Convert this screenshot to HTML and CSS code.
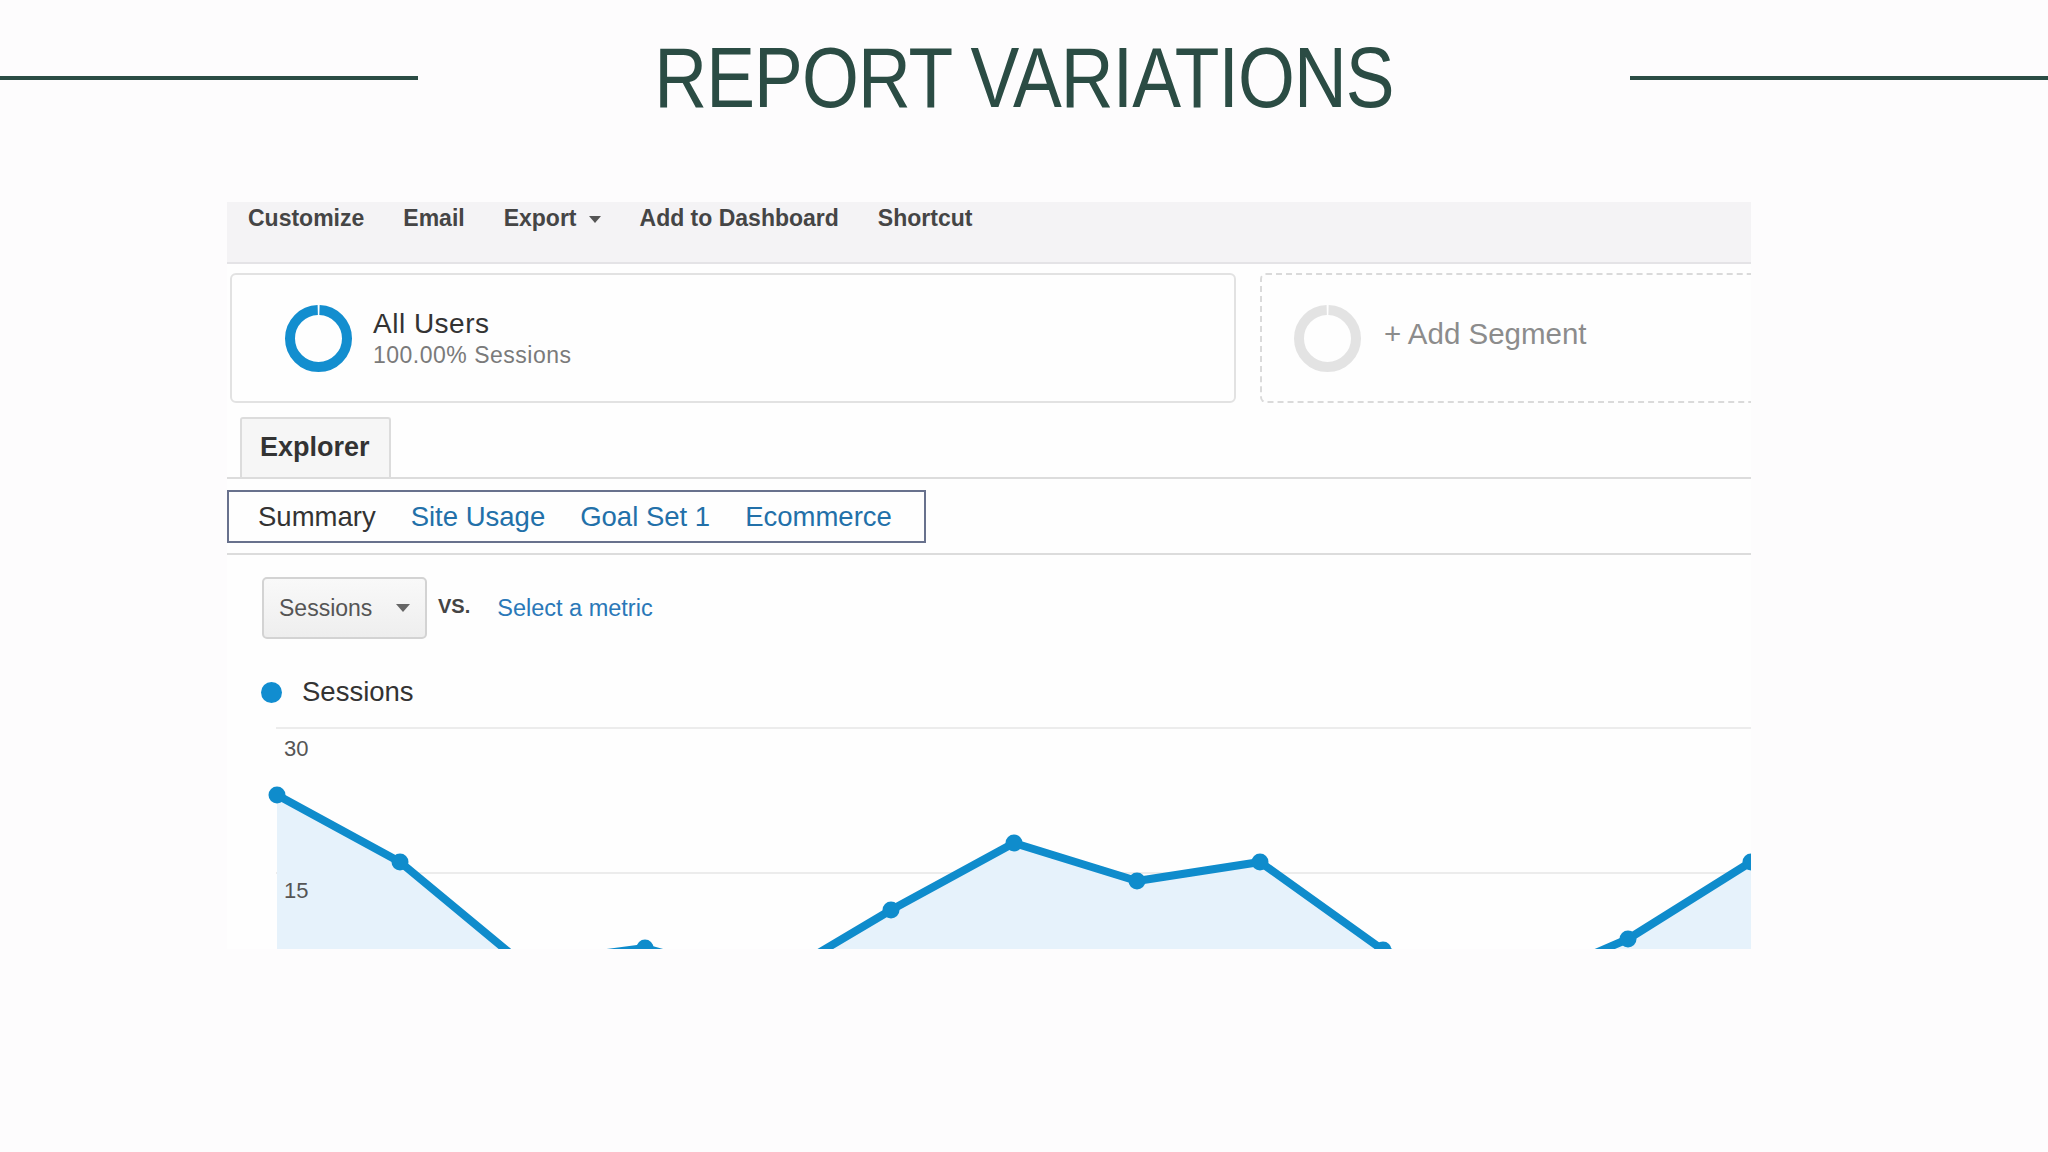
FILE: index.html
```html
<!DOCTYPE html>
<html lang="en">
<head>
    <meta charset="UTF-8">
    <meta name="viewport" content="width=device-width, initial-scale=1.0">
    <title>Report Variations</title>
    <link rel="stylesheet" href="styles.css">
</head>
<body>
<!-- slide title -->
<div class="header">
    <div class="rule"></div>
    <div class="title-wrap">
        <h1 class="title">REPORT VARIATIONS</h1>
    </div>
    <div class="rule"></div>
</div>

<!-- report screenshot -->
<div class="report">
    <div class="toolbar">
        <span>Customize</span>
        <span>Email</span>
        <span>Export<i class="caret"></i></span>
        <span>Add to Dashboard</span>
        <span>Shortcut</span>
    </div>

    <div class="segments">
        <div class="segment">
            <svg class="donut" width="67" height="67" viewBox="0 0 67 67">
                <circle cx="33.5" cy="33.5" r="28.5" fill="none" stroke="#138ecf" stroke-width="10"
                        stroke-dasharray="177 2.1" stroke-dashoffset="-1" transform="rotate(-90 33.5 33.5)"/>
            </svg>
            <div class="segment-text">
                <div class="segment-name">All Users</div>
                <div class="segment-share">100.00% Sessions</div>
            </div>
        </div>
        <div class="segment segment-add">
            <svg class="donut" width="67" height="67" viewBox="0 0 67 67">
                <circle cx="33.5" cy="33.5" r="28.5" fill="none" stroke="#e3e3e3" stroke-width="10"
                        stroke-dasharray="177 2.1" stroke-dashoffset="-1" transform="rotate(-90 33.5 33.5)"/>
            </svg>
            <div class="segment-add-label">+ Add Segment</div>
        </div>
    </div>

    <div class="tabs">
        <div class="tab">Explorer</div>
    </div>

    <div class="subtabs">
        <span class="subtab-current">Summary</span>
        <span class="subtab">Site Usage</span>
        <span class="subtab">Goal Set 1</span>
        <span class="subtab">Ecommerce</span>
    </div>
    <div class="divider"></div>

    <div class="metric-row">
        <div class="select">Sessions<i class="select-caret"></i></div>
        <span class="vs">VS.</span>
        <span class="metric-link">Select a metric</span>
    </div>

    <div class="legend">
        <span class="legend-dot"></span>
        <span>Sessions</span>
    </div>

    <svg class="chart" width="1524" height="242" viewBox="227 707 1524 242">
        <line class="grid" x1="276" y1="728" x2="1751" y2="728"/>
        <line class="grid" x1="276" y1="873" x2="1751" y2="873"/>
        <polygon class="area" points="277,795 400,862 523,964 645,948 768,983 891,910 1014,843 1137,881 1260,862 1383,950 1505,992 1628,939 1751,862 1751,1100 277,1100"/>
        <text class="axis-label" x="284" y="756">30</text>
        <text class="axis-label" x="284" y="898">15</text>
        <polyline class="series" points="277,795 400,862 523,964 645,948 768,983 891,910 1014,843 1137,881 1260,862 1383,950 1505,992 1628,939 1751,862"/>
        <g class="points">
            <circle cx="277" cy="795" r="8.5"/>
            <circle cx="400" cy="862" r="8.5"/>
            <circle cx="523" cy="964" r="8.5"/>
            <circle cx="645" cy="948" r="8.5"/>
            <circle cx="768" cy="983" r="8.5"/>
            <circle cx="891" cy="910" r="8.5"/>
            <circle cx="1014" cy="843" r="8.5"/>
            <circle cx="1137" cy="881" r="8.5"/>
            <circle cx="1260" cy="862" r="8.5"/>
            <circle cx="1383" cy="950" r="8.5"/>
            <circle cx="1505" cy="992" r="8.5"/>
            <circle cx="1628" cy="939" r="8.5"/>
            <circle cx="1751" cy="862" r="8.5"/>
        </g>
    </svg>
</div>
</body>
</html>
```

FILE: styles.css
```css
body {
    margin: 0;
    background-color: #fdfcfd;
    font-family: "Liberation Sans", Arial, sans-serif;
}

/* title */
.header {
    display: flex;
    align-items: center;
    padding-top: 35px;
}

.rule {
    flex: 0 0 418px;
    height: 4px;
    background-color: #2b4c44;
}

.title-wrap {
    flex: 1;
    text-align: center;
}

.title {
    display: inline-block;
    margin: 0;
    font-family: "Liberation Sans", Arial, sans-serif;
    font-weight: normal;
    font-size: 85px;
    line-height: 85px;
    letter-spacing: -1px;
    color: #2b4c44;
    transform: scaleX(0.86);
}

/* report */
.report {
    width: 1524px;
    height: 747px;
    margin: 82px 0 0 227px;
    overflow: hidden;
    background-color: #fefefe;
}

.toolbar {
    display: flex;
    gap: 39px;
    height: 55px;
    padding: 5px 0 0 21px;
    border-bottom: 2px solid #e4e3e6;
    background-color: #f4f3f5;
    font-weight: bold;
    font-size: 23px;
    line-height: 22px;
    color: #454545;
}

.caret {
    display: inline-block;
    margin-left: 12px;
    vertical-align: middle;
    border-left: 6px solid transparent;
    border-right: 6px solid transparent;
    border-top: 7px solid #555;
}

.segments {
    display: flex;
    gap: 24px;
    height: 130px;
    margin-top: 9px;
    padding-left: 3px;
}

.segment {
    box-sizing: border-box;
    flex: 0 0 1006px;
    display: flex;
    align-items: center;
    gap: 21px;
    padding-left: 53px;
    border: 2px solid #e2e2e2;
    border-radius: 6px;
}

.segment-name {
    font-size: 28px;
    line-height: 30px;
    letter-spacing: 0.5px;
    color: #333;
}

.segment-share {
    margin-top: 3px;
    font-size: 23px;
    line-height: 26px;
    letter-spacing: 0.5px;
    color: #7a7a7a;
}

.segment-add {
    flex: 0 0 540px;
    gap: 23px;
    padding-left: 32px;
    border: 2px dashed #dadada;
}

.segment-add-label {
    margin-bottom: 8px;
    font-size: 29.5px;
    line-height: 30px;
    color: #8c8c8c;
}

.tabs {
    display: flex;
    margin-top: 14px;
    padding-left: 13px;
    border-bottom: 2px solid #dcdcdc;
}

.tab {
    box-sizing: border-box;
    width: 151px;
    height: 60px;
    padding: 15px 0 0 18px;
    border: 2px solid #dcdcdc;
    border-bottom: none;
    border-radius: 3px 3px 0 0;
    background-color: #f6f6f6;
    font-weight: bold;
    font-size: 27px;
    line-height: 27px;
    color: #333;
}

.subtabs {
    box-sizing: border-box;
    display: flex;
    align-items: center;
    gap: 35px;
    width: 699px;
    height: 53px;
    margin-top: 11px;
    padding-left: 29px;
    border: 2px solid #68718d;
    font-size: 27.5px;
    line-height: 1;
}

.subtab-current {
    color: #333;
}

.subtab {
    color: #2270a9;
}

.divider {
    height: 2px;
    margin-top: 10px;
    background-color: #dcdcdc;
}

.metric-row {
    display: flex;
    align-items: center;
    margin-top: 22px;
    padding-left: 35px;
}

.select {
    box-sizing: border-box;
    display: flex;
    align-items: center;
    justify-content: space-between;
    width: 165px;
    height: 62px;
    padding: 0 15px;
    border: 2px solid #d3d3d3;
    border-radius: 5px;
    background: linear-gradient(#f9f9f9, #eeeeee);
    font-size: 23px;
    color: #555;
}

.select-caret {
    border-left: 7px solid transparent;
    border-right: 7px solid transparent;
    border-top: 8px solid #666;
}

.vs {
    position: relative;
    top: -2px;
    margin-left: 11px;
    font-weight: bold;
    font-size: 20px;
    color: #444;
}

.metric-link {
    margin-left: 27px;
    font-size: 23.5px;
    color: #2a78b8;
}

.legend {
    display: flex;
    align-items: center;
    gap: 20px;
    height: 30px;
    margin-top: 38px;
    padding-left: 34px;
    font-size: 27.5px;
    color: #333;
}

.legend-dot {
    width: 21px;
    height: 21px;
    border-radius: 50%;
    background-color: #118dd0;
}

/* chart */
.chart {
    display: block;
}

.grid {
    stroke: #ececec;
    stroke-width: 2;
}

.area {
    fill: #e6f2fb;
}

.series {
    fill: none;
    stroke: #0f8ccc;
    stroke-width: 8;
    stroke-linejoin: round;
}

.points circle {
    fill: #0f8ccc;
}

.axis-label {
    font-family: "Liberation Sans", Arial, sans-serif;
    font-size: 22px;
    fill: #555;
}
```
